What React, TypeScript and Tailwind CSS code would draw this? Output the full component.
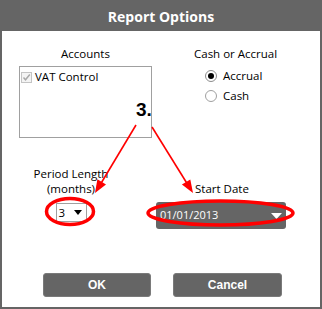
import React from "react";

const F = { fontFamily: '"Open Sans", "Noto Sans", sans-serif' };

export default function App() {
  return (
    <div className="relative w-[322px] h-[309px] bg-white flex flex-col border-x-2 border-b-2 border-[#656565]" style={F}>
      <div className="h-[31px] -mx-[2px] bg-[#656565] flex items-center justify-center">
        <span className="text-white font-bold text-[14px] leading-none pt-[2px]" style={{ fontFamily: '"Open Sans", sans-serif' }}>
          Report Options
        </span>
      </div>
      <div className="flex-1 flex flex-col text-[11.5px] text-black">
        <div className="flex pt-[15px]">
          <div className="ml-[17px] w-[133px] flex flex-col">
            <div className="h-[16px] leading-[16px] text-center">Accounts</div>
            <div className="mt-[4px] h-[72px] border border-[#a0a0a0] pl-[1px] pt-[2px] flex items-start">
              <div className="flex items-center gap-[3px]">
                <div className="w-[11px] h-[11px] border border-[#c4c4c4] bg-[#f4f4f4] flex items-center justify-center">
                  <svg width="9" height="9" viewBox="0 0 9 9">
                    <path d="M1.5 4.5 L3.5 6.8 L7.8 1.5" stroke="#a8a8a8" strokeWidth="1.4" fill="none" />
                  </svg>
                </div>
                <span className="leading-[16px]">VAT Control</span>
              </div>
            </div>
          </div>
          <div className="ml-[42px] flex flex-col">
            <div className="h-[16px] leading-[16px]">Cash or Accrual</div>
            <div className="mt-[4px] pl-[11px] flex flex-col">
              <div className="h-[20px] flex items-center gap-[6px]">
                <div className="w-[12px] h-[12px] rounded-full border border-[#8c8c8c] bg-white flex items-center justify-center">
                  <div className="w-[6px] h-[6px] rounded-full bg-black" />
                </div>
                <span>Accrual</span>
              </div>
              <div className="h-[20px] flex items-center gap-[6px]">
                <div className="w-[12px] h-[12px] rounded-full border border-[#a0a0a0] bg-white" />
                <span>Cash</span>
              </div>
            </div>
          </div>
        </div>
        <div className="flex mt-[28px]">
          <div className="w-[138px] flex flex-col items-center">
            <div className="h-[15px] leading-[15px] text-center">Period Length</div>
            <div className="h-[15px] leading-[15px] text-center">(months)</div>
            <div className="mt-[7px] w-[31px] h-[19px] border border-[#a0a0a0] flex items-center justify-between pl-[2px] pr-[4px]">
              <span className="leading-none">3</span>
              <svg width="8" height="5" viewBox="0 0 8 5">
                <path d="M0 0 L8 0 L4 5 Z" fill="#000" />
              </svg>
            </div>
          </div>
          <div className="ml-[16px] w-[130px] flex flex-col pt-[15px]">
            <div className="h-[15px] leading-[15px] pl-[39px]">Start Date</div>
            <div className="mt-[6px] h-[27px] rounded-[3px] bg-[#656565] flex items-center justify-between pl-[4px] pr-[4px] text-white text-[11px]">
              <span>01/01/2013</span>
              <svg width="11" height="6" viewBox="0 0 11 6">
                <path d="M0 0 L11 0 L5.5 6 Z" fill="#fff" />
              </svg>
            </div>
          </div>
        </div>
        <div className="mt-auto pb-[10px] pl-[41px] flex gap-[22px]">
          <button className="w-[108px] h-[24px] rounded-[3px] bg-[#656565] border border-[#7a7a7a] text-white font-bold text-[12px]" style={{ fontFamily: '"Liberation Sans", Arial, sans-serif' }}>
            OK
          </button>
          <button className="w-[109px] h-[24px] rounded-[3px] bg-[#656565] border border-[#7a7a7a] text-white font-bold text-[12px]" style={{ fontFamily: '"Liberation Sans", Arial, sans-serif' }}>
            Cancel
          </button>
        </div>
      </div>
      <svg className="absolute -left-[2px] top-0 pointer-events-none" width="322" height="309" viewBox="0 0 322 309">
        <text x="136" y="116" fontFamily='"Liberation Sans", Arial, sans-serif' fontWeight="bold" fontSize="19" fill="#000">3.</text>
        <line x1="136" y1="125" x2="100" y2="185" stroke="#ff0000" strokeWidth="1.6" />
        <polygon points="95,193 106,184.5 97.4,179.3" fill="#ff0000" />
        <line x1="152" y1="127" x2="188" y2="185" stroke="#ff0000" strokeWidth="1.6" />
        <polygon points="193,193 190.3,179.4 181.9,184.6" fill="#ff0000" />
        <ellipse cx="70" cy="211.5" rx="23.5" ry="13" stroke="#ff0000" strokeWidth="3.5" fill="none" />
        <ellipse cx="220.5" cy="213" rx="72.5" ry="12" stroke="#ff0000" strokeWidth="3.5" fill="none" />
      </svg>
    </div>
  );
}
